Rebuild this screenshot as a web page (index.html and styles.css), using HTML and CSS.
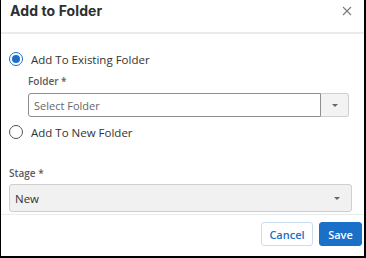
FILE: index.html
```html
<!DOCTYPE html>
<html>
<head>
<meta charset="utf-8">
<link rel="stylesheet" href="styles.css">
</head>
<body>
<div class="dialog">
  <div class="header">
    <div class="title">Add to Folder</div>
    <svg class="close" width="10" height="10" viewBox="0 0 10 10"><path d="M1 1 L9 9 M9 1 L1 9" stroke="#7a7a7a" stroke-width="1.1" fill="none"/></svg>
  </div>
  <div class="body">
    <div class="radio-row">
      <span class="radio checked"><span class="dot"></span></span>
      <span class="radio-label">Add To Existing Folder</span>
    </div>
    <div class="sub">
      <div class="label">Folder *</div>
      <div class="combo">
        <div class="combo-input">Select Folder</div>
        <div class="combo-btn"><span class="caret"></span></div>
      </div>
    </div>
    <div class="radio-row second">
      <span class="radio"></span>
      <span class="radio-label">Add To New Folder</span>
    </div>
    <div class="label stage-label">Stage *</div>
    <div class="select">
      <span>New</span>
      <span class="caret"></span>
    </div>
  </div>
  <div class="footer">
    <button class="btn cancel">Cancel</button>
    <button class="btn save">Save</button>
  </div>
</div>
</body>
</html>
```
FILE: styles.css
```css
html, body {
  margin: 0;
  padding: 0;
  background: #fff;
}
.dialog {
  width: 366px;
  height: 258px;
  box-sizing: border-box;
  border-left: 1px solid #000;
  border-right: 2px solid #000;
  border-bottom: 2px solid #000;
  display: flex;
  flex-direction: column;
  font-family: "Open Sans", "Noto Sans", sans-serif;
  color: #333;
}
.header {
  flex: none;
  height: 34px;
  box-sizing: border-box;
  border-bottom: 2px solid #ebebeb;
  display: flex;
  align-items: flex-start;
  justify-content: space-between;
  padding: 0 12px 0 9px;
}
.title {
  font-family: "Inter", "Liberation Sans", sans-serif;
  font-weight: 700;
  font-size: 14px;
  color: #2f2f2f;
  line-height: 20px;
  margin-top: 1px;
  letter-spacing: 0.1px;
}
.close {
  margin-top: 6px;
}
.body {
  flex: 1;
  padding: 16px 12px 0 8px;
  display: flex;
  flex-direction: column;
}
.radio-row {
  display: flex;
  align-items: center;
  height: 18px;
}
.radio-row.second {
  margin-top: 6px;
}
.radio {
  width: 14px;
  height: 14px;
  box-sizing: border-box;
  border: 1.5px solid #555;
  border-radius: 50%;
  display: flex;
  align-items: center;
  justify-content: center;
  flex: none;
}
.radio.checked {
  border-color: #1a6fc9;
}
.dot {
  width: 8px;
  height: 8px;
  border-radius: 50%;
  background: #1a6fc9;
}
.radio-label {
  margin-left: 8px;
  font-size: 11.5px;
  color: #333;
}
.sub {
  padding-left: 19px;
  display: flex;
  flex-direction: column;
}
.label {
  font-size: 10px;
  font-weight: 600;
  color: #5a5a5a;
  height: 12px;
  line-height: 12px;
}
.sub .label {
  margin-top: 7px;
}
.combo {
  margin-top: 6px;
  display: flex;
  height: 24px;
  width: 321px;
}
.combo-input {
  flex: 1;
  box-sizing: border-box;
  border: 1px solid #8e8e8e;
  border-radius: 3px 0 0 3px;
  font-size: 11px;
  color: #666;
  padding-left: 5px;
  display: flex;
  align-items: center;
}
.combo-btn {
  width: 28px;
  box-sizing: border-box;
  border: 1px solid #cfcfcf;
  border-left: none;
  border-radius: 0 3px 3px 0;
  background: #f3f3f3;
  display: flex;
  align-items: center;
  justify-content: center;
}
.caret {
  width: 0;
  height: 0;
  border-left: 3px solid transparent;
  border-right: 3px solid transparent;
  border-top: 3px solid #666;
}
.stage-label {
  margin-top: 26px;
}
.select {
  margin-top: 5px;
  height: 28px;
  width: 343px;
  box-sizing: border-box;
  border: 1px solid #cfcfcf;
  border-radius: 3px;
  background: #f1f1f1;
  display: flex;
  align-items: center;
  justify-content: space-between;
  padding: 0 11px 0 5px;
  font-size: 11.5px;
  color: #333;
}
.footer {
  flex: none;
  height: 34px;
  border-top: 1px solid #e9ecef;
  display: flex;
  justify-content: flex-end;
  align-items: flex-start;
  padding: 7px 2px 0 0;
  gap: 6px;
}
.btn {
  height: 24px;
  box-sizing: border-box;
  border-radius: 3px;
  font-family: "Open Sans", "Noto Sans", sans-serif;
  font-size: 11px;
  font-weight: 600;
  padding: 0;
  margin: 0;
}
.cancel {
  width: 52px;
  background: #fff;
  border: 1px solid #c9dcf2;
  color: #1a6fc9;
}
.save {
  width: 43px;
  background: #1a6fc9;
  border: 1px solid #1a6fc9;
  color: #fff;
}
```
